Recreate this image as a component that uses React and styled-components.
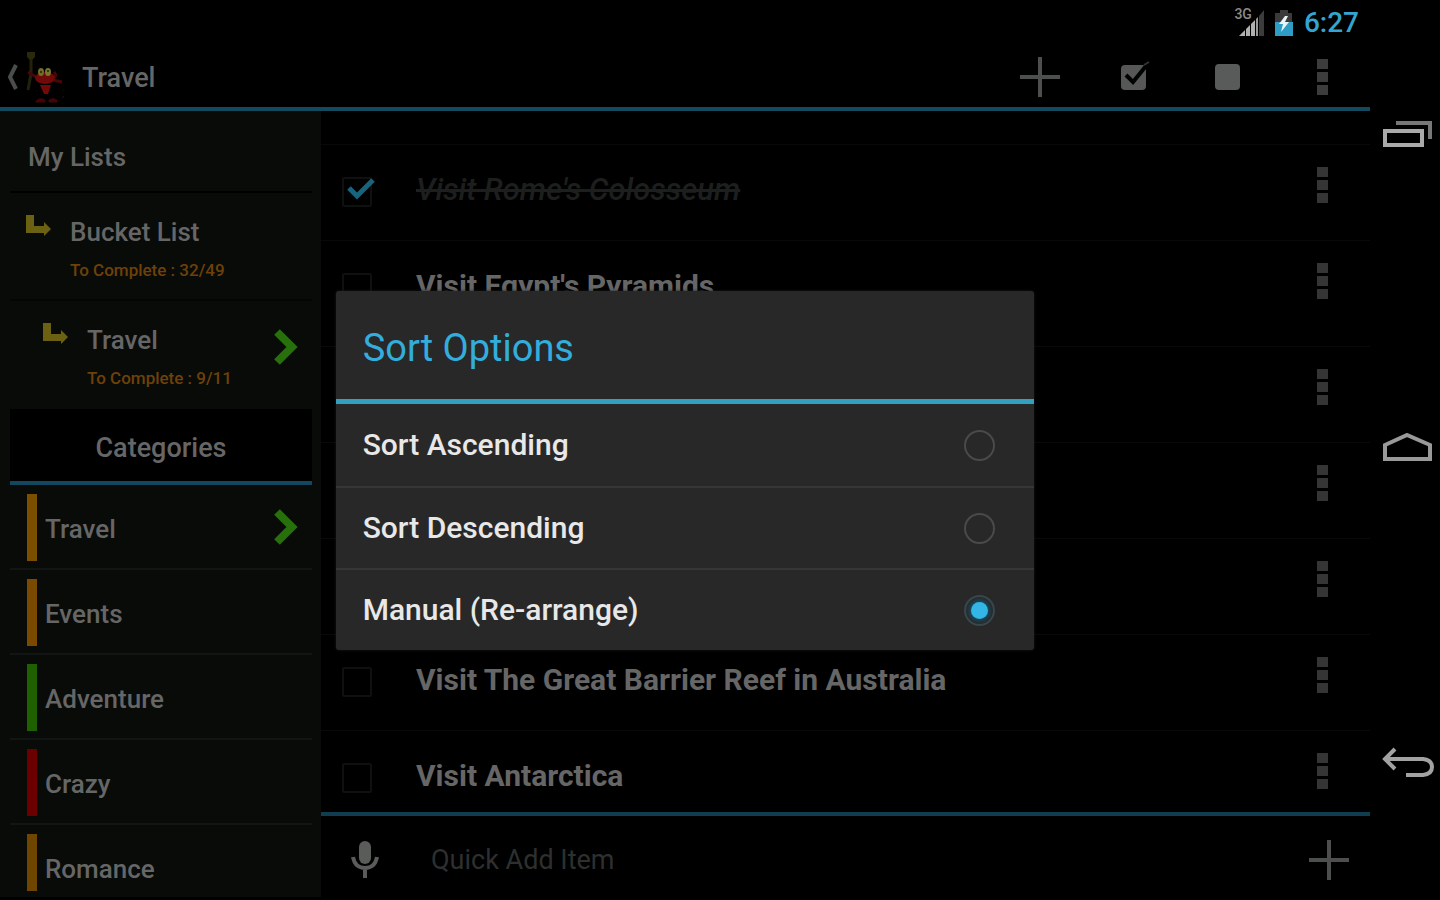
import React, { useState } from "react";
import styled, { createGlobalStyle, css } from "styled-components";

const Global = createGlobalStyle`
  * { box-sizing: border-box; }
  body { margin: 0; background: #000; font-family: Roboto, "Liberation Sans", sans-serif; }
  button, input { font: inherit; }
  h1, h2, ul, p { margin: 0; padding: 0; }
  ul { list-style: none; }
  svg { display: block; flex: none; }
`;

const Device = styled.div`
  display: flex;
  height: 100vh;
  padding-bottom: 3px;
  background: #000;
  color: #666;
`;

const Screen = styled.div`
  position: relative;
  display: flex;
  flex: 1;
  flex-direction: column;
  min-width: 0;
`;

const StatusBar = styled.div`
  display: flex;
  flex: none;
  align-items: center;
  justify-content: flex-end;
  gap: 10px;
  height: 46px;
  padding-right: 11px;
`;

const NetworkLabel = styled.span`
  align-self: flex-start;
  margin: 6px -24px 0 0;
  color: #8a8a8a;
  font-size: 14px;
  font-weight: 500;
  line-height: 16px;
`;

const Clock = styled.time`
  color: #33a5d0;
  font-size: 28px;
  font-weight: 500;
  line-height: 46px;
`;

const ActionBar = styled.header`
  display: flex;
  flex: none;
  align-items: center;
  height: 65px;
  padding-right: 1px;
  border-bottom: 4px solid #124a60;
`;

const IconButton = styled.button`
  display: flex;
  flex: none;
  align-items: center;
  justify-content: center;
  width: ${(p) => p.$width || 94}px;
  height: ${(p) => p.$height || 60}px;
  padding: 0;
  border: 0;
  background: none;
  color: inherit;
  cursor: pointer;
`;

const ScreenTitle = styled.h1`
  flex: 1;
  margin-left: 10px;
  padding-top: 2px;
  font-size: 27px;
  font-weight: 500;
  line-height: 36px;
`;

const Body = styled.div`
  display: flex;
  flex: 1;
  min-height: 0;
`;

const Sidebar = styled.aside`
  display: flex;
  flex: none;
  flex-direction: column;
  width: 321px;
  padding: 0 9px 6px 10px;
  overflow: hidden;
  background: #090b08;
`;

const SideHeading = styled.h2`
  height: 82px;
  padding: 28px 18px 0;
  border-bottom: 2px solid #000;
  font-size: 26px;
  font-weight: 500;
  line-height: 36px;
`;

const ListLink = styled.a`
  display: flex;
  align-items: flex-start;
  height: 108px;
  padding: 20px 14px 0 ${(p) => (p.$nested ? 33 : 16)}px;
  border-bottom: 2px solid ${(p) => (p.$nested ? "transparent" : "#040504")};
  color: inherit;
  text-decoration: none;

  svg:last-child {
    margin-top: 8px;
  }
`;

const ListText = styled.span`
  display: flex;
  flex: 1;
  flex-direction: column;
  gap: 10px;
  padding-top: 1px;
  margin-left: 18px;
`;

const ListName = styled.span`
  font-size: 26px;
  font-weight: 500;
  line-height: 36px;
`;

const ListCount = styled.span`
  color: #6e4108;
  font-size: 17px;
  font-weight: 500;
  line-height: 20px;
`;

const CategoryHeading = styled.h2`
  height: 76px;
  border-bottom: 4px solid #13475f;
  background: #000;
  font-size: 27px;
  font-weight: 500;
  line-height: 78px;
  text-align: center;
`;

const CategoryList = styled.ul`
  flex: 1;
  min-height: 0;
  overflow: hidden;
`;

const CategoryLink = styled.a`
  display: flex;
  align-items: center;
  height: 85px;
  padding: 1px 14px 0 17px;
  border-bottom: 2px solid #121513;
  color: inherit;
  font-size: 26px;
  font-weight: 500;
  line-height: 36px;
  text-decoration: none;
`;

const CategoryBar = styled.span`
  width: 10px;
  height: 67px;
  margin-right: 8px;
  background: ${(p) => p.$color};
`;

const CategoryName = styled.span`
  flex: 1;
  padding-top: 3px;
`;

const Content = styled.main`
  display: flex;
  flex: 1;
  flex-direction: column;
  min-width: 0;
`;

const Items = styled.ul`
  flex: 1;
  min-height: 0;
  overflow: hidden;
`;

const ItemRow = styled.li`
  display: flex;
  align-items: flex-start;
  justify-content: flex-end;
  height: ${(p) => (p.$tall ? 106 : 96)}px;
  padding: 0 1px 0 21px;
  border-bottom: 1px solid #080a09;
`;

const ScrolledRow = styled.li`
  height: 34px;
  border-bottom: 1px solid #080a09;
`;

const ItemLabel = styled.label`
  display: flex;
  flex: 1;
  align-items: flex-start;
  padding-top: 27px;
  font-size: 30px;
  font-weight: 700;
  line-height: 36px;
  ${(p) =>
    p.$done &&
    css`
      color: #1c1f1e;
      font-size: 31px;
      font-style: italic;
      font-weight: 500;
      text-decoration: line-through;
    `}
`;

const CheckHolder = styled.span`
  position: relative;
  width: 32px;
  height: 32px;
  margin: 5px 42px 0 0;

  svg {
    position: absolute;
    top: -3px;
    left: 0;
    pointer-events: none;
  }
`;

const CheckInput = styled.input`
  display: block;
  width: 30px;
  height: 30px;
  margin: 0;
  border: 2px solid #0f1111;
  border-radius: 2px;
  appearance: none;
`;

const QuickAdd = styled.form`
  display: flex;
  flex: none;
  align-items: center;
  height: 85px;
  padding-top: 6px;
  border-top: 4px solid #113d50;
`;

const QuickInput = styled.input`
  flex: 1;
  min-width: 0;
  height: 48px;
  margin: 0;
  padding: 0 0 0 22px;
  border: 0;
  outline: 0;
  background: none;
  color: #888;
  font-size: 27px;

  &::placeholder {
    color: #2d302f;
    opacity: 1;
  }
`;

const NavBar = styled.nav`
  display: flex;
  flex: none;
  flex-direction: column;
  align-items: flex-end;
  justify-content: space-between;
  width: 70px;
  padding: 104px 0 103px;
`;

const Overlay = styled.div`
  position: absolute;
  inset: 44px 0 0;
  display: flex;
  align-items: center;
  justify-content: center;
`;

const Dialog = styled.section`
  width: 51%;
  border-radius: 3px;
  background: #282828;
  box-shadow: 0 0 3px #1a1a1a;
`;

const DialogTitle = styled.h2`
  height: 113px;
  padding-left: 27px;
  border-bottom: 5px solid #33a0c0;
  color: #33addc;
  font-size: 38px;
  font-weight: 400;
  line-height: 114px;
`;

const Option = styled.label`
  display: flex;
  align-items: center;
  justify-content: space-between;
  height: 82px;
  padding: 0 39px 0 27px;
  color: #e8e8e8;
  font-size: 30px;
  font-weight: 500;
  line-height: 36px;

  & + & {
    border-top: 2px solid #363636;
  }
`;

const Radio = styled.input`
  display: grid;
  width: 31px;
  height: 31px;
  margin: 0;
  border: 2px solid #4a4a4a;
  border-radius: 50%;
  appearance: none;
  place-items: center;

  &:checked {
    border-color: #3a474b;
  }

  &:checked::before {
    width: 17px;
    height: 17px;
    border-radius: 50%;
    background: #33b5e5;
    box-shadow: 0 0 5px 2px #17526a;
    content: "";
  }
`;

const Signal = () => (
  <svg width="26" height="27" viewBox="0 0 26 27" aria-hidden="true">
    <path d="M1 26L7 20V26Z" fill="#b0b0b0" />
    <path d="M8 19L12 15V26H8ZM13 14L17 10V26H13Z" fill="#b0b0b0" />
    <path d="M18 9L20 7V26H18Z" fill="#999" />
    <path d="M21 6L26 0V26H21Z" fill="#3c3c3c" />
  </svg>
);

const Battery = () => (
  <svg width="20" height="28" viewBox="0 0 20 28" aria-hidden="true">
    <path d="M6 1h8v3h4v10H1V4h5Z" fill="#3a3a3a" />
    <path d="M1 13h18v14H1Z" fill="#2d9dc6" />
    <path d="M11 7L5 15h4l-2 8 8-10h-4l3-6Z" fill="#e8f4f8" />
  </svg>
);

const Plus = () => (
  <svg width="42" height="42" viewBox="0 0 42 42" fill="none" stroke="#4c4f4d" strokeWidth="4" aria-hidden="true">
    <path d="M1 21H41M21 1V41" />
  </svg>
);

const CheckAll = () => (
  <svg width="36" height="32" viewBox="0 0 36 32" aria-hidden="true">
    <rect x="5" y="4" width="25" height="25" rx="4" fill="#555856" />
    <path d="M10 14L17 21L30 5" fill="none" stroke="#000" strokeWidth="4" />
    <path d="M28 4L33 1" stroke="#333" strokeWidth="2" />
  </svg>
);

const UncheckAll = () => (
  <svg width="32" height="32" viewBox="0 0 32 32" aria-hidden="true">
    <rect x="3" y="3" width="25" height="26" rx="4" fill="#585b59" />
  </svg>
);

const Dots = ({ color = "#353535" }) => (
  <svg width="12" height="38" viewBox="0 0 12 38" fill={color} aria-hidden="true">
    <path d="M1 1h11v10H1ZM1 14h11v10H1ZM1 27h11v10H1Z" />
  </svg>
);

const UpCaret = () => (
  <svg width="12" height="26" viewBox="0 0 12 26" fill="none" stroke="#4b4d4c" strokeWidth="4" aria-hidden="true">
    <path d="M9 1L3 13L9 25" />
  </svg>
);

const Mascot = () => (
  <svg width="46" height="54" viewBox="0 0 46 54" aria-hidden="true">
    <path d="M8 2h8v5l-3 3h-2l-3-3Z" fill="#2a290b" />
    <path d="M12 9V24L9 40" fill="none" stroke="#22220a" strokeWidth="3" />
    <path d="M9 22L19 28M35 22q4 4-2 7M34 30L43 32" fill="none" stroke="#480606" strokeWidth="3" />
    <ellipse cx="26" cy="28" rx="10" ry="6" fill="#700a08" />
    <path d="M21 35h11l-3 9h-4Z" fill="#750908" />
    <ellipse cx="22" cy="22" rx="3" ry="4" fill="#6f6e28" />
    <ellipse cx="29" cy="22" rx="3" ry="4" fill="#777630" />
    <circle cx="22" cy="22" r="1" fill="#241f08" />
    <circle cx="29" cy="21" r="1" fill="#241f08" />
    <path d="M17 51q4-4 9-1v2h-9ZM30 50q4-3 8 0v2h-8ZM43 48l2-2" fill="#420404" stroke="#420404" />
  </svg>
);

const SubArrow = () => (
  <svg width="26" height="24" viewBox="0 0 26 24" fill="#6c6112" aria-hidden="true">
    <path d="M0 2h8v11h10V9l7 7-7 7v-3H0Z" />
  </svg>
);

const Chevron = () => (
  <svg width="24" height="36" viewBox="0 0 24 36" fill="none" stroke="#28700c" strokeWidth="8" aria-hidden="true">
    <path d="M3 3L18 18L3 33" />
  </svg>
);

const Tick = () => (
  <svg width="34" height="30" viewBox="0 0 34 30" fill="none" stroke="#17647f" strokeWidth="5" aria-hidden="true">
    <path d="M7 14L15 22L31 6" />
  </svg>
);

const Mic = () => (
  <svg width="28" height="38" viewBox="0 0 28 38" aria-hidden="true">
    <rect x="8" y="0" width="12" height="23" rx="6" fill="#595c58" />
    <path d="M2 16Q4 27 14 27T26 16M14 27V37" fill="none" stroke="#595c58" strokeWidth="4" />
  </svg>
);

const Recents = () => (
  <svg width="52" height="30" viewBox="0 0 52 30" fill="none" stroke="#9a9a9a" strokeWidth="4" aria-hidden="true">
    <path d="M4 12H41V26H4Z" stroke="#aaa" />
    <path d="M15 4H49V20" stroke="#777" />
  </svg>
);

const Home = () => (
  <svg width="52" height="32" viewBox="0 0 52 32" fill="none" stroke="#999" strokeWidth="4" aria-hidden="true">
    <path d="M4 12L26 2L49 12V26H4Z" />
  </svg>
);

const Back = () => (
  <svg width="54" height="34" viewBox="0 0 54 34" fill="none" stroke="#a2a2a2" strokeWidth="4" aria-hidden="true">
    <path d="M5 12H43Q52 13 52 20T43 28H26" />
    <path d="M15 2L5 12L15 22" />
  </svg>
);

const lists = [
  { name: "Bucket List", count: "To Complete : 32/49" },
  { name: "Travel", count: "To Complete : 9/11", nested: true, active: true },
];

const categories = [
  { name: "Travel", color: "#7a4f00", active: true },
  { name: "Events", color: "#7a4a00" },
  { name: "Adventure", color: "#1f6000" },
  { name: "Crazy", color: "#6c0000" },
  { name: "Romance", color: "#6e4600" },
];

const items = [
  { title: "Visit Rome's Colosseum", done: true },
  { title: "Visit Egypt's Pyramids", tall: true },
  {},
  {},
  {},
  { title: "Visit The Great Barrier Reef in Australia" },
  { title: "Visit Antarctica" },
];

const options = ["Sort Ascending", "Sort Descending", "Manual (Re-arrange)"];

export default function App() {
  const [sort, setSort] = useState(options[2]);

  return (
    <>
      <Global />
      <Device>
        <Screen>
          <StatusBar>
            <NetworkLabel>3G</NetworkLabel>
            <Signal />
            <Battery />
            <Clock>6:27</Clock>
          </StatusBar>
          <ActionBar>
            <IconButton $width={72} aria-label="Up">
              <UpCaret />
              <Mascot />
            </IconButton>
            <ScreenTitle>Travel</ScreenTitle>
            <IconButton aria-label="Add item">
              <Plus />
            </IconButton>
            <IconButton aria-label="Check all">
              <CheckAll />
            </IconButton>
            <IconButton aria-label="Uncheck all">
              <UncheckAll />
            </IconButton>
            <IconButton aria-label="More options">
              <Dots color="#3c3c3c" />
            </IconButton>
          </ActionBar>
          <Body>
            <Sidebar>
              <SideHeading>My Lists</SideHeading>
              {lists.map((l) => (
                <ListLink key={l.name} href="#" $nested={l.nested}>
                  <SubArrow />
                  <ListText>
                    <ListName>{l.name}</ListName>
                    <ListCount>{l.count}</ListCount>
                  </ListText>
                  {l.active && <Chevron />}
                </ListLink>
              ))}
              <CategoryHeading>Categories</CategoryHeading>
              <CategoryList>
                {categories.map((c) => (
                  <li key={c.name}>
                    <CategoryLink href="#">
                      <CategoryBar $color={c.color} />
                      <CategoryName>{c.name}</CategoryName>
                      {c.active && <Chevron />}
                    </CategoryLink>
                  </li>
                ))}
              </CategoryList>
            </Sidebar>
            <Content>
              <Items>
                <ScrolledRow />
                {items.map((item, i) => (
                  <ItemRow key={i} $tall={item.tall}>
                    {item.title && (
                      <ItemLabel $done={item.done}>
                        <CheckHolder>
                          <CheckInput type="checkbox" defaultChecked={item.done} />
                          {item.done && <Tick />}
                        </CheckHolder>
                        {item.title}
                      </ItemLabel>
                    )}
                    <IconButton $height={80} aria-label="Item menu">
                      <Dots />
                    </IconButton>
                  </ItemRow>
                ))}
              </Items>
              <QuickAdd>
                <IconButton type="button" $width={88} aria-label="Voice input">
                  <Mic />
                </IconButton>
                <QuickInput placeholder="Quick Add Item" aria-label="Quick Add Item" />
                <IconButton $width={82} aria-label="Add">
                  <Plus />
                </IconButton>
              </QuickAdd>
            </Content>
          </Body>
          <Overlay>
            <Dialog role="dialog" aria-labelledby="sort-title">
              <DialogTitle id="sort-title">Sort Options</DialogTitle>
              {options.map((o) => (
                <Option key={o}>
                  {o}
                  <Radio type="radio" name="sort" checked={sort === o} onChange={() => setSort(o)} />
                </Option>
              ))}
            </Dialog>
          </Overlay>
        </Screen>
        <NavBar>
          <IconButton $width={66} aria-label="Recent apps">
            <Recents />
          </IconButton>
          <IconButton $width={66} aria-label="Home">
            <Home />
          </IconButton>
          <IconButton $width={66} aria-label="Back">
            <Back />
          </IconButton>
        </NavBar>
      </Device>
    </>
  );
}
